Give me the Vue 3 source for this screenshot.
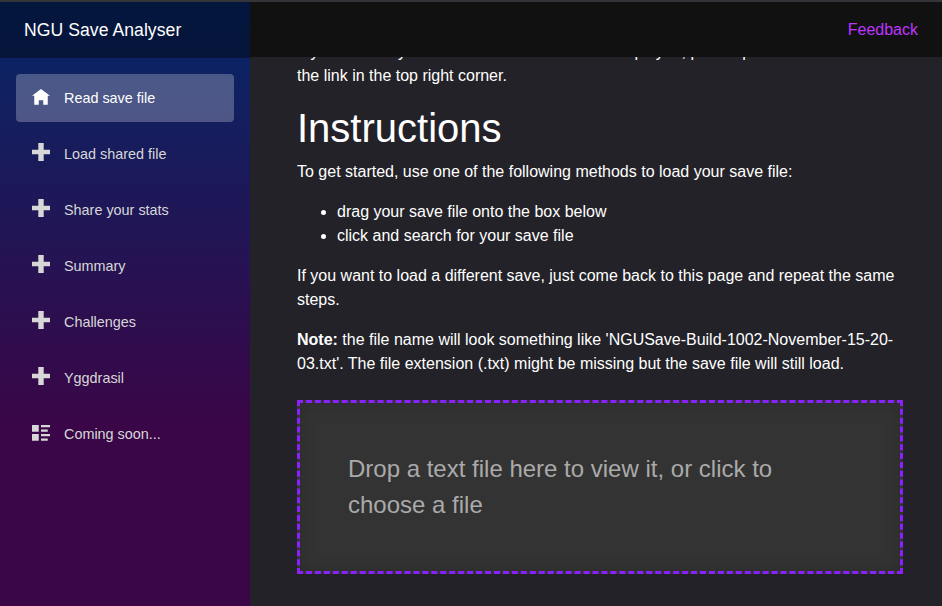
<script setup>
const items = [
  { label: 'Read save file', icon: 'home', active: true },
  { label: 'Load shared file', icon: 'plus' },
  { label: 'Share your stats', icon: 'plus' },
  { label: 'Summary', icon: 'plus' },
  { label: 'Challenges', icon: 'plus' },
  { label: 'Yggdrasil', icon: 'plus' },
  { label: 'Coming soon...', icon: 'list' },
]
const icons = {
  home: 'M4 0 0 3h1v4h2V5h2v2h2V3h1z',
  plus: 'M2.8 0v3H0v2h2.8v3h2.4V5H8V3H5.2V0z',
  list: 'M0 0v3h3V0zM4 0v1h4V0zM4 2v1h3V2zM0 4v3h3V4zM4 4v1h4V4zM4 6v1h3V6z',
}
</script>

<template>
  <div class="page">
    <aside class="sidebar">
      <div class="brand">NGU Save Analyser</div>
      <nav class="nav">
        <a v-for="item in items" :key="item.label" class="link" :class="{ active: item.active }">
          <svg class="icon" :class="item.icon" viewBox="0 0 8 8"><path :d="icons[item.icon]" /></svg>
          <span>{{ item.label }}</span>
        </a>
      </nav>
    </aside>
    <main class="main">
      <header class="top"><a class="feedback">Feedback</a></header>
      <div class="scroll">
        <section class="content">
          <p><span class="lead">If you have any ideas for what else could be displayed, please provide feedback via</span><br>the link in the top right corner.</p>
          <h1>Instructions</h1>
          <p>To get started, use one of the following methods to load your save file:</p>
          <ul>
            <li>drag your save file onto the box below</li>
            <li>click and search for your save file</li>
          </ul>
          <p>If you want to load a different save, just come back to this page and repeat the same steps.</p>
          <p><b>Note:</b> the file name will look something like 'NGUSave-Build-1002-November-15-20-03.txt'. The file extension (.txt) might be missing but the save file will still load.</p>
          <div class="drop">Drop a text file here to view it, or click to choose a file</div>
        </section>
      </div>
    </main>
  </div>
</template>

<style>
body { margin: 0; background: #232228; }
</style>
<style scoped>
.page {
  box-sizing: border-box;
  display: flex;
  height: 606px;
  overflow: hidden;
  border-top: 2px solid #343439;
  background: #232228;
  color: #fff;
  font: 16px/24px "Liberation Sans", Arial, sans-serif;
}
.sidebar {
  flex: 0 0 250px;
  background: linear-gradient(180deg, rgb(5, 39, 103) 0%, #3a0647 70%);
}
.brand {
  box-sizing: border-box;
  height: 56px;
  padding-left: 24px;
  background: rgba(0, 0, 0, .4);
  font-size: 17.6px;
  line-height: 56px;
  letter-spacing: .05px;
}
.nav {
  display: flex;
  flex-direction: column;
  gap: 8px;
  padding: 16px;
}
.link {
  display: flex;
  align-items: center;
  height: 48px;
  padding-left: 16px;
  border-radius: 4px;
  color: #d7d7d7;
  font-size: 14.4px;
}
.link.active { background: rgba(255, 255, 255, .25); color: #fff; }
.icon {
  width: 18px;
  height: 18px;
  margin: 0 14px 4px 0;
  fill: currentColor;
}
.icon.home, .icon.list { margin-bottom: 0; }
.main {
  flex: 1;
  min-width: 0;
  display: flex;
  flex-direction: column;
}
.top {
  flex: 0 0 55px;
  display: flex;
  align-items: center;
  justify-content: flex-end;
  padding-right: 24px;
  background: #111;
}
.feedback { color: #bd35ff; }
.scroll { flex: 1; min-height: 0; overflow: hidden; }
.content { margin: -17px 39px 0 47px; }
.lead { word-spacing: .12px; }
p, ul { margin: 0 0 16px; }
ul { padding-left: 40px; }
h1 {
  margin: 0 0 8px;
  font-size: 40px;
  font-weight: 400;
  line-height: 48px;
}
.drop {
  margin-top: 24px;
  padding: 48px;
  border: 3px dashed #8a20ff;
  background: #333;
  box-shadow: inset 0 0 16px rgba(0, 0, 0, .16);
  color: #aaa;
  font-size: 24px;
  line-height: 36px;
}
</style>
